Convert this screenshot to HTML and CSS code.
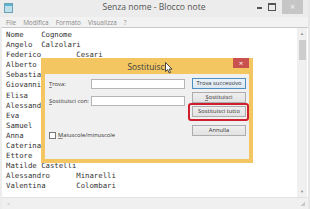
FILE: index.html
```html
<!DOCTYPE html>
<html>
<head>
<meta charset="utf-8">
<link rel="stylesheet" href="styles.css">
</head>
<body>
<div class="win">
  <div class="titlebar">
    <svg class="appicon" width="9" height="10" viewBox="0 0 9 10"><rect x="0.5" y="0.5" width="8" height="9" fill="#bfe0ea" stroke="#6aa3b8"/><rect x="1" y="1" width="7" height="2" fill="#5fb3cf"/></svg>
    <div class="title">Senza nome - Blocco note</div>
    <div class="ctrls">
      <span class="cmin"></span>
      <span class="cmax"></span>
      <span class="cclose">×</span>
    </div>
  </div>
  <div class="menubar">
    <span>File</span><span>Modifica</span><span>Formato</span><span>Visualizza</span><span>?</span>
  </div>
  <div class="edit">
    <pre class="text">Nome    Cognome
Angelo  Calzolari
Federico        Cesari
Alberto
Sebastiano
Giovanni
Elisa
Alessandra
Eva
Samuel
Anna
Caterina
Ettore
Matilde Castelli
Alessandro      Minarelli
Valentina       Colombari</pre>
    <div class="vscroll">
      <span class="up">&#9650;</span>
      <span class="thumb"></span>
      <span class="down">&#9660;</span>
    </div>
  </div>
  <div class="hscroll"><span class="left">&lt;</span><span class="grip"></span></div>

  <div class="dialog">
    <div class="dtitle">
      <span class="dspacer"></span>
      <span class="dname">Sostituisci</span>
      <span class="dclose">×</span>
    </div>
    <div class="dbody">
      <div class="fields">
        <div class="frow"><label><span class="acc acc-t">Trova:</span></label><span class="input"></span></div>
        <div class="frow"><label><span class="acc acc-s">Sostituisci con:</span></label><span class="input"></span></div>
        <div class="check"><span class="box"></span><span class="acc acc-m">Maiuscole/minuscole</span></div>
      </div>
      <div class="buttons">
        <span class="btn def">Trova successivo</span>
        <span class="btn"><span class="acc acc-s">Sostituisci</span></span>
        <span class="btn hl">Sostituisci tutto<span class="ring"></span></span>
        <span class="btn annulla">Annulla</span>
      </div>
    </div>
    <svg class="cursor" width="8" height="12" viewBox="0 0 8 12"><path d="M0.5 0.5 L0.5 9.5 L2.6 7.6 L4.2 11 L5.6 10.4 L4.1 7.1 L7 7.1 Z" fill="#fff" stroke="#222" stroke-width="0.8"/></svg>
  </div>
</div>
</body>
</html>
```
FILE: styles.css
```css
html, body {
  margin: 0;
  padding: 0;
  width: 310px;
  height: 209px;
  overflow: hidden;
  background: #e6e6e6;
}
.win {
  position: relative;
  width: 308px;
  height: 209px;
  background: #ececec;
  font-family: "Open Sans", "Noto Sans", sans-serif;
}
.titlebar {
  height: 17px;
  display: flex;
  align-items: flex-start;
  position: relative;
}
.appicon {
  margin: 3px 0 0 4px;
}
.title {
  position: absolute;
  left: 0;
  right: 0;
  top: 2px;
  text-align: center;
  font-size: 8.6px;
  color: #555;
  line-height: 11px;
}
.ctrls {
  margin-left: auto;
  display: flex;
  align-items: flex-start;
  margin-right: 5px;
}
.cmin {
  width: 5px;
  height: 1.5px;
  background: #555;
  margin: 7px 6px 0 0;
}
.cmax {
  width: 6px;
  height: 5px;
  border: 1px solid #555;
  border-top-width: 2px;
  margin: 3px 6px 0 0;
}
.cclose {
  width: 21px;
  height: 14px;
  background: #c6c6c6;
  color: #f4f4f4;
  font-size: 9px;
  line-height: 14px;
  text-align: center;
}
.menubar {
  height: 10px;
  display: flex;
  align-items: center;
  padding-left: 6px;
  font-size: 6.4px;
  color: #8a8a8a;
  background: #f2f2f2;
}
.menubar span {
  margin-right: 7px;
}
.edit {
  height: 169px;
  display: flex;
  background: #fff;
  border-top: 1px solid #c9c9c9;
  margin-left: 2px;
}
.text {
  flex: 1;
  margin: 0;
  padding: 2px 0 0 4px;
  font-family: "DejaVu Sans Mono", "Liberation Mono", monospace;
  font-size: 7.3px;
  line-height: 10.1px;
  color: #333;
  overflow: hidden;
}
.vscroll {
  width: 10px;
  background: #f0f0f0;
  display: flex;
  flex-direction: column;
  align-items: center;
  margin-right: 1px;
}
.up, .down {
  font-size: 4px;
  color: #888;
  line-height: 8px;
  height: 8px;
}
.up { margin-top: 2px; }
.thumb {
  width: 7px;
  height: 20px;
  background: #cdcdcd;
  margin-top: 2px;
}
.down { margin-top: auto; margin-bottom: 1px; }
.hscroll {
  height: 11px;
  margin-left: 2px;
  background: #f0f0f0;
  border-top: 1px solid #e2e2e2;
  display: flex;
  align-items: center;
  font-size: 6px;
  color: #aaa;
}
.left { margin-left: 5px; }
.grip {
  margin-left: auto;
  margin-right: 3px;
  width: 5px;
  height: 5px;
  background: linear-gradient(135deg, transparent 50%, #c8c8c8 50%);
}

/* dialog */
.dialog {
  position: absolute;
  left: 41px;
  top: 58px;
  width: 212px;
  height: 105px;
  background: #f3c662;
  display: flex;
  flex-direction: column;
  font-family: "Open Sans", "Noto Sans", sans-serif;
}
.dtitle {
  height: 16px;
  display: flex;
  align-items: flex-start;
}
.dspacer { width: 20px; }
.dname {
  flex: 1;
  text-align: center;
  font-size: 8.4px;
  color: #3a3a3a;
  line-height: 14px;
  padding-top: 2px;
}
.dclose {
  width: 16px;
  height: 10px;
  margin-right: 4px;
  background: #c9514e;
  color: #fff;
  font-size: 8px;
  line-height: 10px;
  text-align: center;
}
.dbody {
  flex: 1;
  margin: 0 4px 4px 4px;
  background: #f0f0f0;
  display: flex;
  padding: 4px 3px 0 4px;
  font-size: 5.8px;
  color: #333;
}
.acc {
  background-image: linear-gradient(#444, #444);
  background-repeat: no-repeat;
  background-position: 0 88%;
  background-size: 3.4px 0.6px;
}
.acc-t { background-size: 3.2px 0.6px; }
.acc-m { background-size: 4.6px 0.6px; }
.fields {
  width: 136px;
  padding-top: 1px;
  display: flex;
  flex-direction: column;
  gap: 7px;
}
.frow {
  display: flex;
  align-items: center;
  height: 10px;
}
.frow label {
  width: 43px;
}
.input {
  width: 93px;
  height: 8px;
  background: #fff;
  border: 1px solid #b5b5b5;
}
.check {
  margin-top: 18px;
  display: flex;
  align-items: center;
  gap: 2px;
}
.box {
  width: 5px;
  height: 5px;
  background: #fff;
  border: 1px solid #777;
}
.buttons {
  margin-left: 7px;
  width: 58px;
  display: flex;
  flex-direction: column;
  gap: 3px;
}
.btn {
  position: relative;
  display: block;
  height: 9px;
  line-height: 9px;
  border: 1px solid #adadad;
  background: linear-gradient(#efefef, #e2e2e2);
  text-align: center;
  white-space: nowrap;
}
.btn.def {
  border-color: #4f8fc0;
  background: linear-gradient(#eaf2f8, #dde8f1);
}
.ring {
  position: absolute;
  left: -5px;
  right: -4px;
  top: -4px;
  bottom: -5px;
  border: 2px solid #cf1f2c;
  border-radius: 3px;
}
.annulla {
  margin-top: 5px;
}
.cursor {
  position: absolute;
  left: 124px;
  top: 4px;
}
```
